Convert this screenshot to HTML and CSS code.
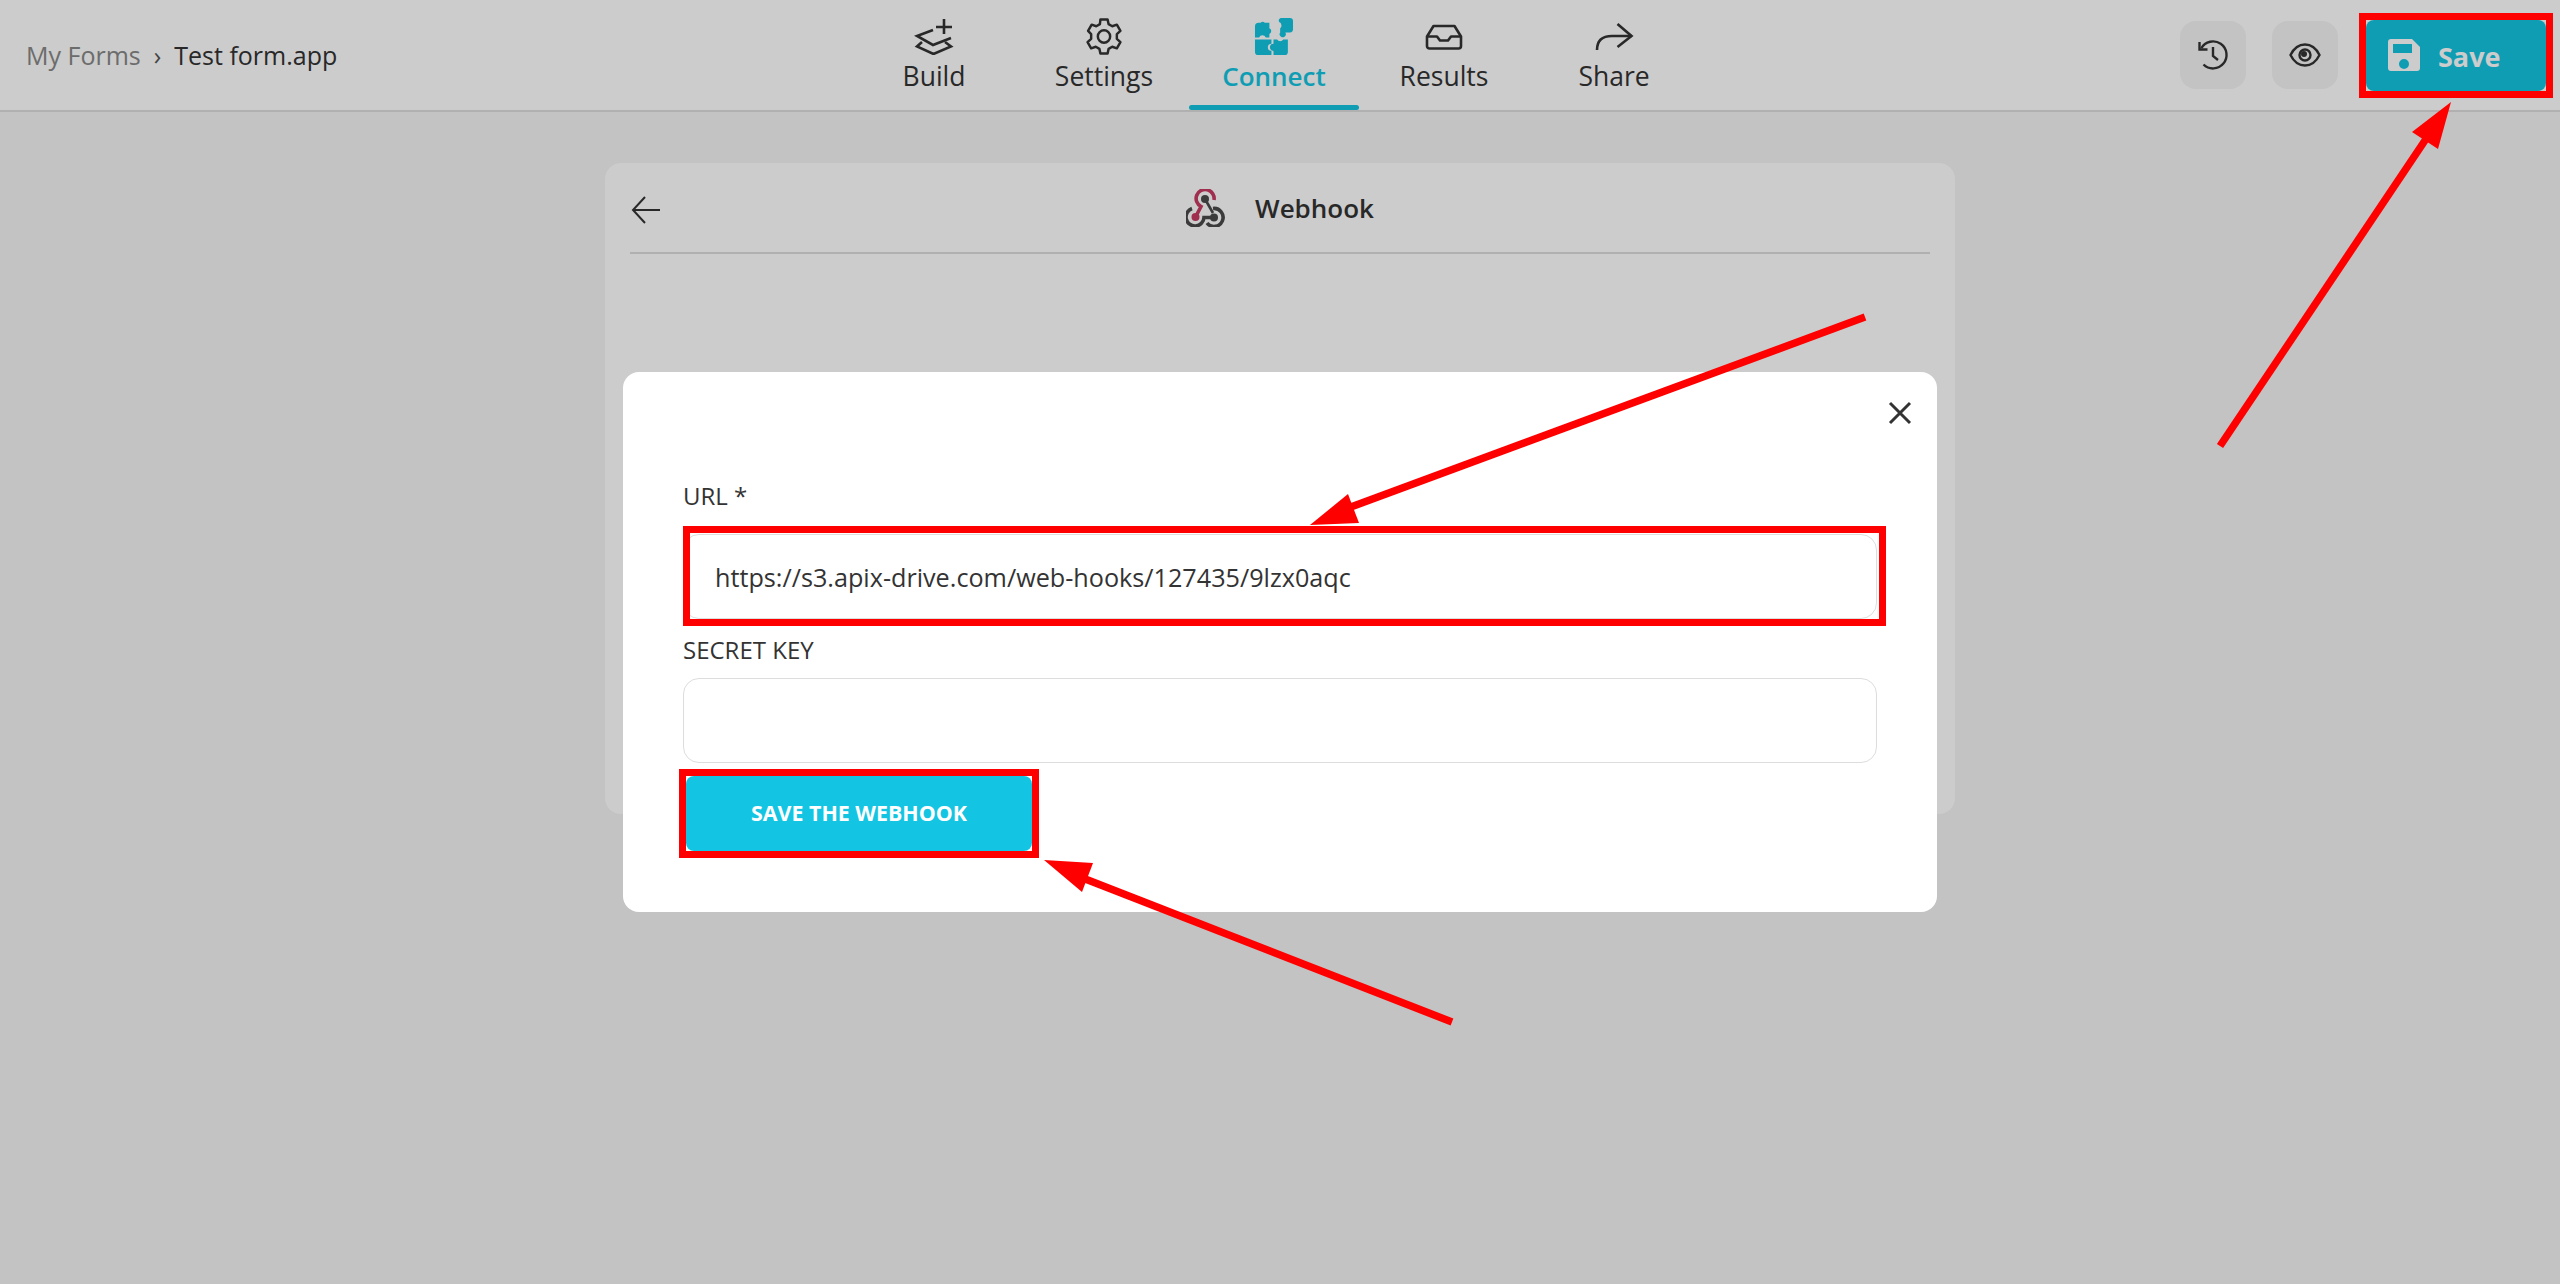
FILE: index.html
```html
<!DOCTYPE html>
<html lang="en">
<head>
    <meta charset="UTF-8">
    <meta name="viewport" content="width=device-width, initial-scale=1.0">
    <title>Test form.app</title>
    <link rel="stylesheet" href="styles.css">
</head>
<body>
    <header class="topbar">
        <div class="crumbs">
            <span class="crumb-link">My Forms</span>
            <span class="crumb-sep">›</span>
            <span class="crumb-current">Test form.app</span>
        </div>
        <nav class="tabs">
            <div class="tab">
                <svg class="tab-icon" viewBox="0 0 40 37" fill="none" stroke="currentColor" stroke-width="2.6">
                    <path d="M22 9h16M30 1v15"/>
                    <path d="M19 12 3 18l16 9 18-7"/>
                    <path d="M8 24l-5 4.500 16.500 7.500L37 28.500 31 24"/>
                </svg>
                <span>Build</span>
            </div>
            <div class="tab">
                <svg class="tab-icon" viewBox="0 0 36 36" fill="none" stroke="currentColor" stroke-width="2.4" stroke-linejoin="round">
                    <circle cx="18" cy="18" r="6"/>
                    <path d="M14.500 1.500h7l1 4.500 3.500 2 4.500-1.500 3.500 6-3.500 3.200v4.600l3.500 3.200-3.500 6-4.500-1.500-3.500 2-1 4.500h-7l-1-4.500-3.500-2-4.500 1.500-3.500-6 3.500-3.200v-4.600L2.500 12.500l3.500-6L10.500 8l3.500-2z"/>
                </svg>
                <span>Settings</span>
            </div>
            <div class="tab tab-active">
                <svg class="tab-icon" viewBox="0 0 37 36" fill="currentColor">
                    <path d="M0 19V8a3.500 3.500 0 0 1 3.500-3.500h2a3 3 0 0 1 4 0H14V10a3 3 0 0 1 0 5.500V19h-3.500a3.500 3.500 0 0 0-6.500 0z"/>
                    <path d="M25 0h9a3 3 0 0 1 3 3v8a3 3 0 0 1-3 3h-4.500a3 3 0 1 1-5 0V10a3.500 3.500 0 0 0-1-6 3 3 0 0 1 1.500-4z"/>
                    <path d="M0 21h16v4a3.500 3.500 0 0 0 0 7v4H3a3 3 0 0 1-3-3z"/>
                    <path d="M18 21h3.500a3.500 3.500 0 0 0 6 0H32v12a3 3 0 0 1-3 3H18v-4a3.500 3.500 0 0 1 0-7z"/>
                </svg>
                <span>Connect</span>
            </div>
            <div class="tab">
                <svg class="tab-icon" viewBox="0 0 40 37" fill="none" stroke="currentColor" stroke-width="2.6" stroke-linejoin="round">
                    <path d="M9.500 8h21l6.500 10.500V28a2.500 2.500 0 0 1-2.500 2.500h-29A2.500 2.500 0 0 1 3 28v-9.500z"/>
                    <path d="M3 18.500h10l3 4h8l3-4h10"/>
                </svg>
                <span>Results</span>
            </div>
            <div class="tab">
                <svg class="tab-icon" viewBox="0 0 40 37" fill="none" stroke="currentColor" stroke-width="2.6">
                    <path d="M37.500 18H18C8 18 3 23 3 32"/>
                    <path d="M23.500 6l14 12-14 11"/>
                </svg>
                <span>Share</span>
            </div>
            <div class="tab-line"></div>
        </nav>
        <div class="actions">
            <button class="icon-btn">
                <svg width="32" height="32" viewBox="0 0 32 32" fill="none" stroke="currentColor" stroke-width="2.400">
                    <path d="M4.300 9.250A13.500 13.500 0 1 1 6.500 25.500"/>
                    <path d="M2.500 3v7.500h8"/>
                    <path d="M16 8v9l5 4"/>
                </svg>
            </button>
            <button class="icon-btn">
                <svg width="32" height="24" viewBox="0 0 32 24" fill="none" stroke="currentColor" stroke-width="2.400">
                    <path d="M1.500 12C5 5 10 1.500 16 1.500S27 5 30.500 12C27 19 22 22.500 16 22.500S5 19 1.500 12z"/>
                    <circle cx="16" cy="12" r="5.500"/>
                    <circle cx="15" cy="11" r="3" fill="currentColor" stroke="none"/>
                </svg>
            </button>
            <button class="save-btn">
                <svg width="32" height="32" viewBox="0 0 32 32">
                    <path fill="#fff" fill-rule="evenodd" d="M3 0h21l8 8v21a3 3 0 0 1-3 3H3a3 3 0 0 1-3-3V3a3 3 0 0 1 3-3zM5 5v9h19V5zm11 15a5 5 0 1 0 0 10 5 5 0 0 0 0-10z"/>
                </svg>
                <span>Save</span>
            </button>
        </div>
    </header>

    <main class="panel">
        <div class="panel-head">
            <svg class="back-icon" width="30" height="28" viewBox="0 0 30 28" fill="none" stroke="#333" stroke-width="2">
                <path d="M29 14H2M14 1 2 14l12 13"/>
            </svg>
            <div class="panel-title">
                <svg width="40" height="38" viewBox="0 0 40 38" fill="none" stroke-width="3.600">
                    <path stroke="#c73a63" d="M9.500 28 15 17.500A9 9 0 1 1 28 11"/>
                    <path stroke="#4a4a4a" d="M6 19.500A9 9 0 1 0 18 28.500H28"/>
                    <path stroke="#4a4a4a" stroke-width="2.600" d="M19 10 27 24"/>
                    <path stroke="#4a4a4a" d="M27 19.500A9 9 0 1 1 21 34"/>
                    <circle cx="19" cy="10" r="4" fill="#4a4a4a"/>
                    <circle cx="9.500" cy="28" r="4" fill="#c73a63"/>
                    <circle cx="28" cy="28.500" r="4" fill="#4a4a4a"/>
                </svg>
                <span>Webhook</span>
            </div>
        </div>
    </main>

    <div class="scrim">
        <div class="modal">
            <svg class="close-icon" width="24" height="24" viewBox="0 0 24 24" fill="none" stroke="#333" stroke-width="3">
                <path d="M2 2l20 20M22 2 2 22"/>
            </svg>
            <label class="field-label">URL *</label>
            <div class="field-input field-url">https://s3.apix-drive.com/web-hooks/127435/9lzx0aqc</div>
            <label class="field-label">SECRET KEY</label>
            <div class="field-input"></div>
            <button class="webhook-btn">SAVE THE WEBHOOK</button>
        </div>
    </div>

    <!-- red annotations drawn on top of the screenshot -->
    <svg class="marks" width="2560" height="1284" viewBox="0 0 2560 1284" fill="none" stroke="#f00" stroke-width="7">
        <rect x="2362.500" y="16.500" width="187" height="78"/>
        <rect x="686.500" y="529.500" width="1196" height="93"/>
        <rect x="682.500" y="772.500" width="353" height="82"/>
        <path stroke-width="7.500" d="M1865 317 1340 511"/>
        <path stroke-width="7.500" d="M1452 1022 1075 875"/>
        <path stroke-width="7.500" d="M2220 446 2432 130"/>
        <polygon fill="#f00" stroke="none" points="1310,525 1348,494 1359,523"/>
        <polygon fill="#f00" stroke="none" points="1044,860 1093,863 1082,892"/>
        <polygon fill="#f00" stroke="none" points="2451,102 2412,132 2438,149"/>
    </svg>
</body>
</html>
```

FILE: styles.css
```css
* {
    box-sizing: border-box;
}
body {
    margin: 0;
    height: 1284px;
    overflow: hidden;
    background: #f4f4f4;
    font-family: 'Open Sans', sans-serif;
    color: #333;
}
.topbar {
    display: flex;
    align-items: center;
    height: 112px;
    background: #fff;
    border-bottom: 2px solid #ddd;
}
.crumbs {
    width: 849px;
    padding-left: 26px;
    font-size: 25px;
    display: flex;
    gap: 13px;
}
.crumb-link {
    color: #888;
}
.crumb-sep {
    color: #555;
}
.tabs {
    display: flex;
    position: relative;
    height: 110px;
}
.tab {
    width: 170px;
    display: flex;
    flex-direction: column;
    align-items: center;
    padding-top: 18px;
    font-size: 26.500px;
    font-weight: 500;
    line-height: 36px;
}
.tab-icon {
    height: 37px;
    width: 40px;
    margin-bottom: 3px;
}
.tab-active {
    color: #13c5e2;
    font-size: 26px;
    font-weight: 600;
}
.tab-line {
    position: absolute;
    left: 340px;
    bottom: 0;
    width: 170px;
    height: 5px;
    border-radius: 3px;
    background: #13c5e2;
}
.actions {
    margin-left: auto;
    margin-right: 14px;
    display: flex;
    align-items: center;
    gap: 26px;
}
.icon-btn {
    width: 66px;
    height: 68px;
    border: 0;
    border-radius: 16px;
    background: #f4f4f4;
    color: #333;
    display: flex;
    align-items: center;
    justify-content: center;
}
.save-btn {
    width: 180px;
    height: 71px;
    margin-left: 2px;
    border: 0;
    border-radius: 8px;
    background: #13c5e2;
    color: #fff;
    font-family: inherit;
    font-size: 27px;
    font-weight: 700;
    display: flex;
    align-items: center;
    gap: 18px;
    padding-left: 22px;
}
.save-btn span {
    margin-top: 3px;
}
.panel {
    width: 1350px;
    height: 651px;
    margin: 51px auto 0;
    padding: 0 25px;
    background: #fff;
    border-radius: 16px;
}
.panel-head {
    display: flex;
    align-items: center;
    justify-content: center;
    position: relative;
    height: 91px;
    border-bottom: 2px solid #ddd;
}
.back-icon {
    position: absolute;
    left: 1px;
    top: 33px;
}
.panel-title {
    display: flex;
    align-items: center;
    gap: 29px;
    font-size: 26px;
    font-weight: 600;
}
.scrim {
    position: fixed;
    inset: 0;
    background: rgba(0, 0, 0, 0.2);
    display: flex;
    align-items: center;
    justify-content: center;
}
.modal {
    position: relative;
    width: 1314px;
    height: 540px;
    padding: 106px 60px 0;
    background: #fff;
    border-radius: 16px;
}
.close-icon {
    position: absolute;
    top: 29px;
    right: 25px;
}
.field-label {
    display: block;
    height: 46px;
    font-size: 24px;
    line-height: 35px;
}
.field-input {
    height: 85px;
    margin-bottom: 13px;
    padding-left: 31px;
    border: 1px solid #ddd;
    border-radius: 16px;
    font-size: 25.200px;
    line-height: 84px;
}
.field-url {
    margin-top: 10px;
}
.webhook-btn {
    display: block;
    width: 346px;
    height: 75px;
    margin-left: 3px;
    padding-bottom: 3px;
    border: 0;
    border-radius: 8px;
    background: #13c5e2;
    color: #fff;
    font-family: inherit;
    font-size: 21.400px;
    font-weight: 700;
}
.marks {
    position: absolute;
    left: 0;
    top: 0;
}
```
